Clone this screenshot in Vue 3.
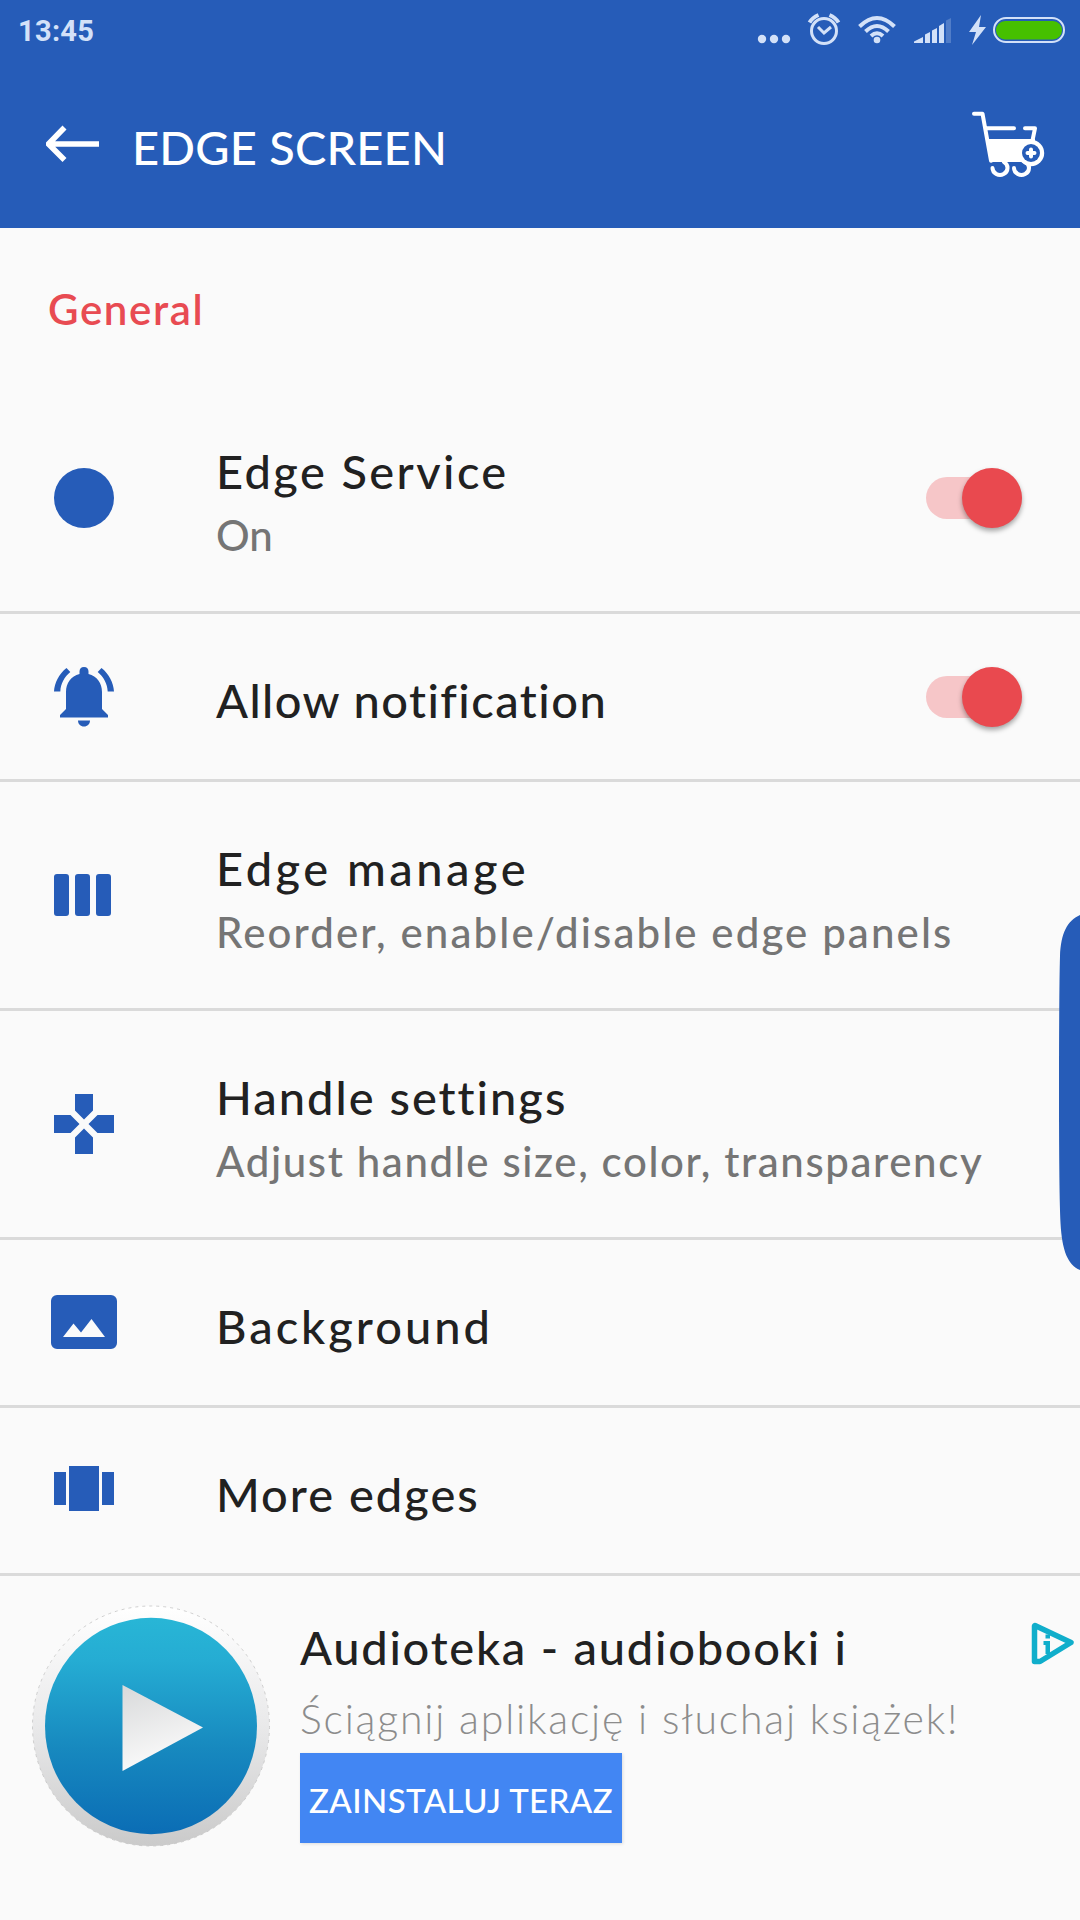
<template>
  <div class="screen">
    <!-- Status bar and toolbar -->
    <header class="top">
      <div class="status-bar">
        <span class="clock">13:45</span>
        <svg class="status-icons" viewBox="750 0 330 60" width="330" height="60">
          <g fill="#d3e1f8">
            <circle cx="762" cy="39" r="4.2" />
            <circle cx="774" cy="39" r="4.2" />
            <circle cx="786" cy="39" r="4.2" />
          </g>
          <g fill="none" stroke="#d3e1f8" stroke-width="3">
            <circle cx="824" cy="31" r="12.5" />
            <path d="M818 27l6 6 7-6" />
            <path d="M809.5 22.5q3-5 9-7.5M838.500 22.500q-3-5-9-7.500" stroke-width="4" />
          </g>
          <g fill="none" stroke="#d3e1f8" stroke-width="4">
            <path d="M859.500 26.500q17.500-17 35 0" />
            <path d="M865.500 31.500q11.500-11 23 0" />
            <path d="M871 36q6-5.500 12 0" />
          </g>
          <circle cx="877" cy="40" r="3.3" fill="#d3e1f8" />
          <g fill="#d3e1f8">
            <path d="M914 43v-1.500l9-4.500v6zM925 43v-8.500l5-2.500v11zM932 43V30.500l5-2.500v15z" />
            <path d="M939 43V26l5-3v20z" />
            <path d="M946 43V20.500l5-2.500v25z" opacity="0.25" />
            <path d="M981 15l-12 17h7l-4 13 14-18h-7z" />
          </g>
          <rect x="994" y="18" width="70" height="24" rx="12" fill="none" stroke="#d3e1f8" stroke-width="2" />
          <rect x="996" y="21" width="66" height="18.500" rx="9" fill="#46c000" />
        </svg>
      </div>
      <div class="toolbar">
        <svg class="back" viewBox="46 124 54 40" width="54" height="40">
          <path d="M64.500 127.500L48.500 144l16 16M49 144h50" fill="none" stroke="#fff" stroke-width="5.600" />
        </svg>
        <h1 class="title">EDGE SCREEN</h1>
        <svg class="cart" viewBox="970 108 78 72" width="78" height="72">
          <g fill="none" stroke="#fff" stroke-width="4" stroke-linecap="round" stroke-linejoin="round">
            <path d="M974 113.700h8.500l8.500 47M987 128.300h27M1025 128.300h10l-2.500 12" />
            <path d="M992.500 168a7.500 7 0 1 0 11.500-6M1014 168a7.500 7 0 1 0 11.500-6" />
          </g>
          <path d="M986 139h49v23h-45z" fill="#fff" />
          <circle cx="1031" cy="153" r="13.200" fill="#fff" />
          <circle cx="1031" cy="153" r="9" fill="#265cb8" />
          <path d="M1031 149.500v7M1027.500 153h7" stroke="#fff" stroke-width="4" stroke-linecap="round" />
        </svg>
      </div>
    </header>

    <h2 class="section">General</h2>

    <ul class="list">
      <li v-for="item in items" :key="item.title" class="row" :class="{ tall: item.summary }">
        <svg class="row-icon" viewBox="0 0 72 72" width="72" height="72">
          <path :d="icons[item.icon]" fill="#265cb8" fill-rule="evenodd" />
        </svg>
        <div class="text">
          <div class="row-title" :style="{ letterSpacing: item.spacing }">{{ item.title }}</div>
          <div v-if="item.summary" class="summary" :style="{ letterSpacing: item.summarySpacing }">{{ item.summary }}</div>
        </div>
        <button
          v-if="'enabled' in item"
          class="switch"
          :class="{ on: item.enabled }"
          :aria-label="item.title"
          @click="item.enabled = !item.enabled"
        >
          <span class="thumb"></span>
        </button>
      </li>
    </ul>

    <!-- Ad banner -->
    <section class="ad">
      <svg class="ad-logo" viewBox="30 1602 244 248" width="244" height="248">
        <defs>
          <linearGradient id="rim" x1="0" y1="0" x2="0" y2="1">
            <stop offset="0" stop-color="#ffffff" />
            <stop offset="0.500" stop-color="#e9e9ea" />
            <stop offset="1" stop-color="#cacaca" />
          </linearGradient>
          <linearGradient id="disc" x1="0" y1="0" x2="0" y2="1">
            <stop offset="0" stop-color="#28b6d6" />
            <stop offset="0.200" stop-color="#25acd3" />
            <stop offset="0.600" stop-color="#1789bf" />
            <stop offset="1" stop-color="#0b6db5" />
          </linearGradient>
          <linearGradient id="play" x1="0" y1="0" x2="0.300" y2="1">
            <stop offset="0" stop-color="#d8d9da" />
            <stop offset="1" stop-color="#fbfbfb" />
          </linearGradient>
        </defs>
        <ellipse cx="151" cy="1726" rx="118.500" ry="120" fill="url(#rim)" />
        <ellipse cx="151" cy="1726" rx="118.500" ry="120" fill="none" stroke="#c4c4c4" stroke-width="0.800" stroke-dasharray="3 4" />
        <ellipse cx="151" cy="1726" rx="106" ry="108.200" fill="url(#disc)" />
        <path d="M122.500 1685l80.500 42.500-80.500 43.500z" fill="url(#play)" />
      </svg>
      <div class="ad-body">
        <div class="ad-title">Audioteka - audiobooki i</div>
        <div class="ad-text">Ściągnij aplikację i słuchaj książek!</div>
        <button class="ad-button">ZAINSTALUJ TERAZ</button>
      </div>
      <svg class="ad-choices" viewBox="0 0 46 44" width="46" height="44">
        <path d="M4 3.500L40 20.500 9 39.500H3.500V4z" fill="none" stroke="#10aecb" stroke-width="5.500" stroke-linejoin="round" />
        <path d="M14.500 12.500h4.500v4h-4.500zM12.500 19H19v13h-4.500v-9h-2z" fill="#10aecb" />
      </svg>
    </section>

    <!-- Edge panel handle -->
    <svg class="handle" viewBox="0 0 21 356" width="21" height="356">
      <path d="M21 0C8 6 2 18 1 41Q0 75 0 178t1.500 130C3 336 9 350 21 355z" fill="#265cb8" />
    </svg>
  </div>
</template>

<script setup>
import { ref } from 'vue'

const items = ref([
  { title: 'Edge Service', summary: 'On', icon: 'circle', enabled: true, spacing: '2.4px', summarySpacing: '0px' },
  { title: 'Allow notification', icon: 'bell', enabled: true, spacing: '1.45px' },
  { title: 'Edge manage', summary: 'Reorder, enable/disable edge panels', icon: 'columns', spacing: '3.5px', summarySpacing: '2.1px' },
  { title: 'Handle settings', summary: 'Adjust handle size, color, transparency', icon: 'pad', spacing: '2px', summarySpacing: '1.6px' },
  { title: 'Background', icon: 'image', spacing: '3px' },
  { title: 'More edges', icon: 'carousel', spacing: '2px' }
])

// All icons are drawn on a 72 x 72 grid
const icons = {
  circle: 'M36 6a30 30 0 1 0 0 60a30 30 0 1 0 0-60z',
  bell: 'M36 7c-3 0-4.500 2-4.500 4.500V14C23 16 18 23 18 32v17l-6 6v2.500h48V55l-6-6V32c0-9-5-16-13.500-18v-2.500C40.500 9 39 7 36 7zM30 60.500h12c0 3.500-2.500 6-6 6s-6-2.500-6-6zM18.500 8C11 14 6.500 22.500 6 31.500h6.300c.4-8 4-14.500 10-19.500zM53.500 8l-3.800 4c6 5 9.600 11.500 10 19.500H66C65.500 22.500 61 14 53.500 8z',
  columns: 'M9 15h9a3 3 0 0 1 3 3v36a3 3 0 0 1-3 3H9a3 3 0 0 1-3-3V18a3 3 0 0 1 3-3zM30 15h9a3 3 0 0 1 3 3v36a3 3 0 0 1-3 3h-9a3 3 0 0 1-3-3V18a3 3 0 0 1 3-3zM51 15h9a3 3 0 0 1 3 3v36a3 3 0 0 1-3 3h-9a3 3 0 0 1-3-3V18a3 3 0 0 1 3-3z',
  pad: 'M27 6h18v16.500l-9 9-9-9zM66 27v18H49.500l-9-9 9-9zM45 66H27V49.500l9-9 9 9zM6 45V27h16.500l9 9-9 9z',
  image: 'M9 9h54a6 6 0 0 1 6 6v42a6 6 0 0 1-6 6H9a6 6 0 0 1-6-6V15a6 6 0 0 1 6-6zM15 51h42L43.500 33 33 46.500l-7.500-9z',
  carousel: 'M6 18h12v33H6zM21 12h30v45H21zM54 18h12v33H54z'
}
</script>

<style>
body {
  background: #fafafa;
}
</style>

<style scoped>
.screen {
  position: relative;
  width: 1080px;
  height: 1920px;
  overflow: hidden;
  background: #fafafa;
  color: #212121;
  font-family: Lato, 'Open Sans', sans-serif;
  font-weight: 500;
}

.top {
  height: 228px;
  background: #265cb8;
  color: #fff;
}

.status-bar {
  display: flex;
  align-items: center;
  justify-content: space-between;
  height: 60px;
  padding-left: 18px;
}

.clock {
  padding-top: 2px;
  color: #d3e1f8;
  font: 700 29px/58px Roboto, sans-serif;
  letter-spacing: 0.3px;
}

.toolbar {
  display: flex;
  align-items: center;
  height: 168px;
  padding: 0 32px 0 46px;
}

.title {
  flex: 1;
  margin: 0 0 0 32px;
  padding-top: 5px;
  font-size: 47px;
  font-weight: 500;
  line-height: 56px;
  letter-spacing: 0.2px;
}

.section {
  height: 101px;
  margin: 0;
  padding: 56px 0 0 48px;
  color: #e84b52;
  font-size: 42px;
  font-weight: 600;
  line-height: 50px;
  letter-spacing: 1.6px;
}

.list {
  margin: 0;
  padding: 0;
  list-style: none;
}

.row {
  display: flex;
  align-items: center;
  box-sizing: border-box;
  height: 168px;
  padding: 0 58px 0 48px;
  border-bottom: 3px solid #dadada;
}

.row.tall {
  height: 229px;
}

.row-icon {
  flex: none;
  margin-bottom: 1px;
}

.tall .row-icon {
  margin-bottom: 0;
}

.text {
  flex: 1;
  align-self: flex-start;
  padding: 58px 0 0 96px;
  white-space: nowrap;
}

.row-title {
  font-size: 47px;
  line-height: 56px;
}

.summary {
  margin-top: 11px;
  color: #757575;
  font-size: 42px;
  line-height: 50px;
}

.switch {
  display: flex;
  align-items: center;
  flex: none;
  width: 96px;
  height: 42px;
  padding: 0;
  border: 0;
  border-radius: 21px;
  background: #d0d0d0;
}

.switch.on {
  justify-content: flex-end;
  background: #f6c6c8;
}

.thumb {
  flex: none;
  width: 60px;
  height: 60px;
  border-radius: 50%;
  background: #fff;
  box-shadow: 0 3px 5px rgba(0, 0, 0, 0.35);
}

.switch.on .thumb {
  background: #e9494f;
}

.ad {
  display: flex;
  align-items: flex-start;
  padding: 26px 3px 0 30px;
}

.ad-logo {
  flex: none;
}

.ad-body {
  flex: 1;
  padding: 17px 0 0 26px;
  white-space: nowrap;
}

.ad-title {
  font-size: 47px;
  line-height: 56px;
  letter-spacing: 1.75px;
}

.ad-text {
  margin-top: 19px;
  color: #8c8c8c;
  font-size: 41px;
  font-weight: 300;
  line-height: 50px;
  letter-spacing: 1.8px;
}

.ad-button {
  display: block;
  width: 322px;
  height: 90px;
  margin-top: 9px;
  padding: 3px 0 0;
  border: 0;
  background: #4286f3;
  color: #fff;
  font: inherit;
  font-size: 33px;
  letter-spacing: 0.4px;
  box-shadow: 1px 1px 3px rgba(0, 0, 0, 0.12);
}

.ad-choices {
  flex: none;
  margin-top: 20px;
}

.handle {
  position: absolute;
  top: 915px;
  right: 0;
}
</style>
